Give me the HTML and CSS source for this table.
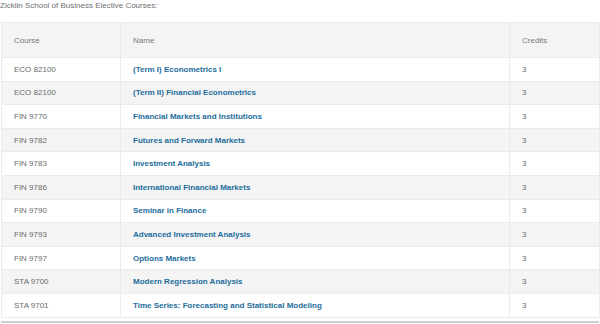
FILE: index.html
```html
<!DOCTYPE html>
<html>
<head>
<meta charset="utf-8">
<link rel="stylesheet" href="styles.css">
</head>
<body>
<p class="caption">Zicklin School of Business Elective Courses:</p>
<table class="courses">
  <colgroup><col class="c1"><col class="c2"><col class="c3"></colgroup>
  <thead>
    <tr><th>Course</th><th>Name</th><th>Credits</th></tr>
  </thead>
  <tbody>
    <tr><td>ECO 82100</td><td><a href="#">(Term I) Econometrics I</a></td><td>3</td></tr>
    <tr><td>ECO 82100</td><td><a href="#">(Term II) Financial Econometrics</a></td><td>3</td></tr>
    <tr><td>FIN 9770</td><td><a href="#">Financial Markets and Institutions</a></td><td>3</td></tr>
    <tr><td>FIN 9782</td><td><a href="#">Futures and Forward Markets</a></td><td>3</td></tr>
    <tr><td>FIN 9783</td><td><a href="#">Investment Analysis</a></td><td>3</td></tr>
    <tr><td>FIN 9786</td><td><a href="#">International Financial Markets</a></td><td>3</td></tr>
    <tr><td>FIN 9790</td><td><a href="#">Seminar in Finance</a></td><td>3</td></tr>
    <tr><td>FIN 9793</td><td><a href="#">Advanced Investment Analysis</a></td><td>3</td></tr>
    <tr><td>FIN 9797</td><td><a href="#">Options Markets</a></td><td>3</td></tr>
    <tr><td>STA 9700</td><td><a href="#">Modern Regression Analysis</a></td><td>3</td></tr>
    <tr><td>STA 9701</td><td><a href="#">Time Series: Forecasting and Statistical Modeling</a></td><td>3</td></tr>
  </tbody>
</table>
<div class="rule"></div>
</body>
</html>
```
FILE: styles.css
```css
html, body {
  margin: 0;
  padding: 0;
  background: #fff;
}
body {
  font-family: "Liberation Sans", Arial, sans-serif;
  font-size: 8px;
  color: #666;
}
.caption {
  margin: 0;
  padding: 1px 0 0 0;
  height: 21px;
  line-height: 9px;
  color: #6f6f6f;
}
.courses {
  margin-left: 1px;
  width: 598px;
  border-collapse: collapse;
  table-layout: fixed;
}
.c1 { width: 119px; }
.c2 { width: 389px; }
.c3 { width: 90px; }
.courses th,
.courses td {
  border: 1px solid #ebebeb;
  text-align: left;
  padding: 0 0 0 12px;
  line-height: 9px;
}
.courses th {
  height: 34px;
  font-weight: normal;
  color: #777;
  background: #f4f4f4;
}
.courses td {
  height: 22.6px;
  color: #6a6a6a;
}
.courses tbody tr:nth-child(even) td {
  background: #f4f4f4;
}
.courses td a {
  color: #1c6d9c;
  font-weight: bold;
  text-decoration: none;
}
.rule {
  margin: 3px 0 0 1px;
  width: 598px;
  border-top: 2px solid #cfcfcf;
}
```
